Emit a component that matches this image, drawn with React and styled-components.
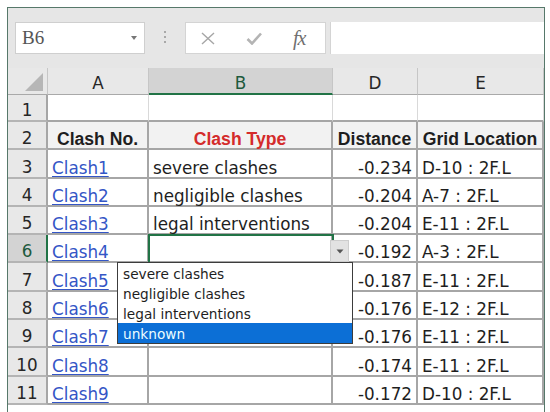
import styled, { createGlobalStyle } from "styled-components";

const GlobalStyle = createGlobalStyle`
  html, body {
    margin: 0;
    background: #fff;
    font-family: "DejaVu Sans", "Liberation Sans", sans-serif;
  }
`;

const rows = [
  { n: 3, no: "Clash1", type: "severe clashes", dist: "-0.234", grid: "D-10 : 2F.L" },
  { n: 4, no: "Clash2", type: "negligible clashes", dist: "-0.204", grid: "A-7 : 2F.L" },
  { n: 5, no: "Clash3", type: "legal interventions", dist: "-0.204", grid: "E-11 : 2F.L" },
  { n: 6, no: "Clash4", type: "", dist: "-0.192", grid: "A-3 : 2F.L", active: true },
  { n: 7, no: "Clash5", type: "", dist: "-0.187", grid: "E-11 : 2F.L" },
  { n: 8, no: "Clash6", type: "", dist: "-0.176", grid: "E-12 : 2F.L" },
  { n: 9, no: "Clash7", type: "", dist: "-0.176", grid: "E-11 : 2F.L" },
  { n: 10, no: "Clash8", type: "", dist: "-0.174", grid: "E-11 : 2F.L" },
  { n: 11, no: "Clash9", type: "", dist: "-0.172", grid: "D-10 : 2F.L" },
];

const options = ["severe clashes", "negligible clashes", "legal interventions", "unknown"];

export default function App() {
  return (
    <>
      <GlobalStyle />
      <Frame>
        <Toolbar>
          <NameBox>
            <span>B6</span>
            <SmallArrow />
          </NameBox>
          <Dots>
            <svg width="4" height="14" viewBox="0 0 4 14">
              <rect x="1" y="0" width="2" height="2" fill="#a8a8a8" />
              <rect x="1" y="5" width="2" height="2" fill="#a8a8a8" />
              <rect x="1" y="10" width="2" height="2" fill="#a8a8a8" />
            </svg>
          </Dots>
          <FormulaButtons>
            <svg width="14" height="13" viewBox="0 0 14 13">
              <path d="M1 1 L13 12 M13 1 L1 12" stroke="#a6a6a6" strokeWidth="1.4" fill="none" />
            </svg>
            <svg width="16" height="13" viewBox="0 0 16 13">
              <path d="M1.5 7 L6 11.5 L15 1.5" stroke="#b4b4b4" strokeWidth="2.6" fill="none" />
            </svg>
            <Fx>fx</Fx>
          </FormulaButtons>
          <FormulaInput />
        </Toolbar>

        <Sheet>
          <Corner>
            <svg width="40" height="26" viewBox="0 0 40 26">
              <polygon points="17,23 35,23 35,5" fill="#b6b6b6" />
            </svg>
          </Corner>
          <ColHeader>A</ColHeader>
          <ColHeader $selected>B</ColHeader>
          <ColHeader>D</ColHeader>
          <ColHeader>E</ColHeader>

          <RowHeader>1</RowHeader>
          <Cell $plain />
          <Cell $plain />
          <Cell $plain />
          <Cell $plain />

          <RowHeader>2</RowHeader>
          <Cell $head $align="center">Clash No.</Cell>
          <Cell $head $align="center" $red>Clash Type</Cell>
          <Cell $head $align="center">Distance</Cell>
          <Cell $head $align="center">Grid Location</Cell>

          {rows.map((r) => (
            <Row key={r.n} row={r} />
          ))}
        </Sheet>
      </Frame>
    </>
  );
}

function Row({ row }) {
  return (
    <>
      <RowHeader $selected={row.active}>{row.n}</RowHeader>
      <Cell>
        <Link>{row.no}</Link>
      </Cell>
      <Cell $active={row.active}>
        {row.type}
        {row.active && <Dropdown />}
      </Cell>
      <Cell $align="flex-end">{row.dist}</Cell>
      <Cell>{row.grid}</Cell>
    </>
  );
}

function Dropdown() {
  return (
    <>
      <DropButton>
        <svg width="8" height="5" viewBox="0 0 8 5">
          <polygon points="0.5,0.5 7.5,0.5 4,4.5" fill="#555" />
        </svg>
      </DropButton>
      <List>
        {options.map((o, i) => (
          <Option key={o} $highlight={i === options.length - 1}>
            {o}
          </Option>
        ))}
      </List>
    </>
  );
}

const Frame = styled.div`
  margin: 7px 0 0 7px;
  width: 538px;
  height: 405px;
  box-sizing: border-box;
  border: 1px solid #56786a;
  border-bottom: none;
  overflow: hidden;
`;

const Toolbar = styled.div`
  display: flex;
  align-items: center;
  height: 60px;
  padding-left: 7px;
  background: #e6e6e6;
`;

const NameBox = styled.div`
  display: flex;
  align-items: center;
  justify-content: space-between;
  box-sizing: border-box;
  width: 130px;
  height: 32px;
  padding: 0 7px 0 6px;
  background: #fff;
  border: 1px solid #cfcfcf;
  font-family: "Liberation Serif", serif;
  font-size: 19px;
  color: #555;
`;

const SmallArrow = styled.span`
  width: 0;
  height: 0;
  border-left: 3px solid transparent;
  border-right: 3px solid transparent;
  border-top: 4px solid #777;
`;

const Dots = styled.div`
  display: flex;
  justify-content: center;
  width: 40px;
`;

const FormulaButtons = styled.div`
  display: flex;
  align-items: center;
  gap: 31px;
  box-sizing: border-box;
  width: 141px;
  height: 32px;
  padding-left: 15px;
  background: #fff;
  border: 1px solid #d4d4d4;
`;

const Fx = styled.span`
  font-family: "Liberation Serif", serif;
  font-style: italic;
  font-size: 20px;
  color: #707070;
  letter-spacing: -1px;
`;

const FormulaInput = styled.div`
  flex: 1;
  height: 32px;
  margin-left: 4px;
  background: #fff;
  border-left: 1px solid #d4d4d4;
`;

const Sheet = styled.div`
  display: grid;
  grid-template-columns: 40px 101px 184px 85px 126px;
  grid-template-rows: 27px 27px repeat(10, 28.3px);
  font-size: 16.8px;
  color: #1e1e1e;
`;

const Corner = styled.div`
  background: #e8e8e8;
  border-right: 1px solid #c6c6c6;
  border-bottom: 1px solid #a9a9a9;
  svg {
    display: block;
  }
`;

const ColHeader = styled.div`
  display: flex;
  align-items: flex-end;
  justify-content: center;
  box-sizing: border-box;
  padding-bottom: ${(p) => (p.$selected ? "1px" : "2px")};
  line-height: 18px;
  background: ${(p) => (p.$selected ? "#d3d3d3" : "#e8e8e8")};
  color: ${(p) => (p.$selected ? "#1d5a3d" : "#262626")};
  border-right: 1px solid #c6c6c6;
  border-bottom: ${(p) => (p.$selected ? "2px solid #217346" : "1px solid #a9a9a9")};
`;

const RowHeader = styled.div`
  display: flex;
  align-items: flex-end;
  justify-content: center;
  box-sizing: border-box;
  padding-bottom: 1px;
  line-height: 18px;
  background: ${(p) => (p.$selected ? "#d3d3d3" : "#e8e8e8")};
  color: ${(p) => (p.$selected ? "#1d5a3d" : "#262626")};
  border-right: 2px solid ${(p) => (p.$selected ? "#217346" : "#a6a6a6")};
  border-bottom: 2px solid #b4b4b4;
`;

const Cell = styled.div`
  position: ${(p) => (p.$active ? "relative" : "static")};
  display: flex;
  align-items: flex-end;
  justify-content: ${(p) => p.$align || "flex-start"};
  box-sizing: border-box;
  padding: 0 4px;
  line-height: 18px;
  white-space: nowrap;
  background: ${(p) => (p.$head ? "#f2f2f2" : "#fff")};
  font-family: ${(p) => (p.$head ? '"Liberation Sans", sans-serif' : "inherit")};
  font-weight: ${(p) => (p.$head ? 700 : 400)};
  font-size: ${(p) => (p.$head ? "17.6px" : "inherit")};
  color: ${(p) => (p.$red ? "#d42b2b" : "inherit")};
  border-right: ${(p) => (p.$plain ? "1px solid #d9d9d9" : "2px solid #a6a6a6")};
  border-bottom: 2px solid #a6a6a6;
  outline: ${(p) => (p.$active ? "2px solid #217346" : "none")};
  outline-offset: -1px;
`;

const Link = styled.span`
  color: #3456c6;
  text-decoration: underline;
  text-underline-offset: 2px;
`;

const DropButton = styled.div`
  position: absolute;
  left: calc(100% - 1px);
  top: 5px;
  display: flex;
  align-items: center;
  justify-content: center;
  box-sizing: border-box;
  width: 19px;
  height: 22px;
  background: #e2e2e2;
  border: 1px solid #cdcdcd;
  z-index: 2;
`;

const List = styled.div`
  position: absolute;
  left: -32px;
  top: 27px;
  z-index: 3;
  width: 236px;
  box-sizing: border-box;
  background: #fff;
  border: 1px solid #3c3c3c;
  font-size: 13.7px;
  color: #1e1e1e;
`;

const Option = styled.div`
  height: 20px;
  line-height: 22px;
  padding-left: 5px;
  background: ${(p) => (p.$highlight ? "#0c6fd6" : "transparent")};
  color: ${(p) => (p.$highlight ? "#eafcff" : "inherit")};
`;
